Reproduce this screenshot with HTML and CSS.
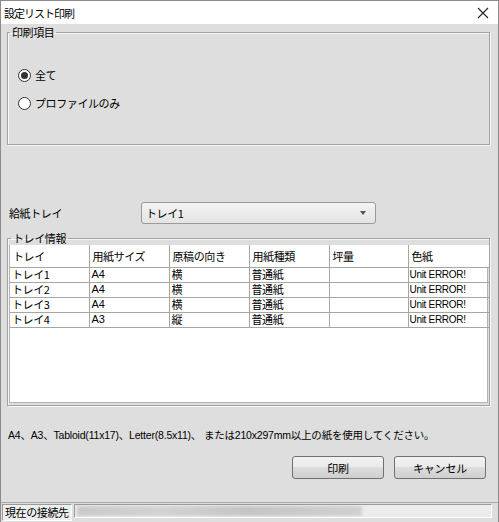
FILE: index.html
```html
<!DOCTYPE html>
<html lang="ja">
<head>
<meta charset="utf-8">
<title>設定リスト印刷</title>
<link rel="stylesheet" href="styles.css">
</head>
<body>
<div class="window">
  <div class="titlebar">
    <span class="title">設定リスト印刷</span>
    <svg class="close" width="12" height="12" viewBox="0 0 12 12"><path d="M1 1 L11 11 M11 1 L1 11" stroke="#222" stroke-width="1.1" fill="none"/></svg>
  </div>
  <div class="content">
    <fieldset class="group group-print">
      <legend>印刷項目</legend>
      <div class="radios">
        <label class="radio"><span class="radio-circle checked"></span>全て</label>
        <label class="radio"><span class="radio-circle"></span>プロファイルのみ</label>
      </div>
    </fieldset>
    <div class="tray-row">
      <span class="tray-label">給紙トレイ</span>
      <div class="select"><span class="select-text">トレイ1</span><span class="arrow"></span></div>
    </div>
    <fieldset class="group group-tray">
      <legend>トレイ情報</legend>
      <div class="table-wrap">
        <table class="grid">
          <thead>
            <tr><th>トレイ</th><th>用紙サイズ</th><th>原稿の向き</th><th>用紙種類</th><th>坪量</th><th>色紙</th></tr>
          </thead>
          <tbody>
            <tr><td>トレイ1</td><td class="lat">A4</td><td>横</td><td>普通紙</td><td></td><td class="lat err">Unit ERROR!</td></tr>
            <tr><td>トレイ2</td><td class="lat">A4</td><td>横</td><td>普通紙</td><td></td><td class="lat err">Unit ERROR!</td></tr>
            <tr><td>トレイ3</td><td class="lat">A4</td><td>横</td><td>普通紙</td><td></td><td class="lat err">Unit ERROR!</td></tr>
            <tr><td>トレイ4</td><td class="lat">A3</td><td>縦</td><td>普通紙</td><td></td><td class="lat err">Unit ERROR!</td></tr>
          </tbody>
        </table>
      </div>
    </fieldset>
    <p class="note">A4、A3、Tabloid(11x17)、Letter(8.5x11)、 または210x297mm以上の紙を使用してください。</p>
    <div class="buttons">
      <button class="btn">印刷</button>
      <button class="btn">キャンセル</button>
    </div>
  </div>
  <div class="statusbar">
    <span class="status-label">現在の接続先</span>
    <div class="status-field"><span class="blurred"></span></div>
  </div>
</div>
</body>
</html>
```

FILE: styles.css
```css
* { box-sizing: border-box; }
html, body { margin: 0; padding: 0; }
body {
  width: 499px;
  height: 522px;
  overflow: hidden;
  font-family: "Noto Sans CJK JP", "Liberation Sans", sans-serif;
  font-size: 11px;
  letter-spacing: -0.4px;
  color: #000;
  background: #dedede;
}
.window {
  width: 499px;
  height: 522px;
  border: 1px solid #8c8c8c;
  border-bottom: none;
  display: flex;
  flex-direction: column;
  background: #dedede;
}
.titlebar {
  height: 23px;
  background: #fff;
  display: flex;
  align-items: center;
  justify-content: space-between;
  padding: 0 9px 0 3px;
  flex: none;
}
.title { font-size: 11px; line-height: 14px; letter-spacing: -1px; }
.close { display: block; }

.content {
  height: 478px;
  flex: none;
  display: flex;
  flex-direction: column;
}

.group {
  margin: 0 8px 0 6px;
  padding: 0;
  border: 1px solid #a3a3a3;
  box-shadow: 1px 1px 0 #f6f6f6, inset 1px 1px 0 #f6f6f6;
  min-width: 0;
}
.group legend {
  margin-left: 2px;
  padding: 0 2px;
  font-size: 11px;
  line-height: 14px;
}
.group-print { margin-top: 1px; }
.radios {
  display: flex;
  flex-direction: column;
  gap: 12px;
  padding: 28px 0 33px 10px;
}
.radio {
  display: flex;
  align-items: center;
  height: 16px;
  line-height: 16px;
  gap: 4px;
}
.radio-circle {
  width: 13px;
  height: 13px;
  border-radius: 50%;
  border: 1px solid #333;
  background: #fff;
  display: flex;
  align-items: center;
  justify-content: center;
}
.radio-circle.checked::after {
  content: "";
  width: 7px;
  height: 7px;
  border-radius: 50%;
  background: #333;
}

.tray-row {
  display: flex;
  align-items: center;
  height: 22px;
  margin-top: 57px;
  padding-left: 8px;
}
.tray-label { width: 132px; }
.select {
  width: 235px;
  height: 22px;
  border: 1px solid #9a9a9a;
  border-radius: 3px;
  background: linear-gradient(#f3f3f3, #e4e4e4);
  display: flex;
  align-items: center;
  justify-content: space-between;
  padding: 0 9px 0 4px;
}
.arrow {
  width: 0;
  height: 0;
  border-left: 3.5px solid transparent;
  border-right: 3.5px solid transparent;
  border-top: 4px solid #555;
}

.group-tray { margin-top: 7px; padding: 0 1px 2px 1px; }
.table-wrap {
  height: 158px;
  background: #fff;
  border: 1px solid #b4b4b4;
  border-top: none;
}
.grid {
  border-collapse: collapse;
  table-layout: fixed;
  width: 479px;
}
.grid th, .grid td {
  width: 80px;
  text-align: left;
  font-weight: normal;
  white-space: nowrap;
  overflow: hidden;
  padding: 0 0 0 2px;
  border-right: 1px solid #a6a6a6;
}
.grid th:first-child, .grid td:first-child { width: 79px; }
.grid th:last-child, .grid td:last-child { width: 81px; border-right: none; }
.grid th:nth-child(5), .grid td:nth-child(5) { width: 79px; }
.grid th {
  height: 22px;
  line-height: 20px;
  font-size: 11px;
  border-bottom: 1px solid #a6a6a6;
  padding-left: 3px;
  background: #fff;
}
.grid td {
  height: 15px;
  line-height: 13px;
  font-size: 11px;
  border-bottom: 1px solid #a6a6a6;
}
.grid td.lat {
  font-family: "Liberation Sans", sans-serif;
  font-size: 11px;
  letter-spacing: 0;
}
.grid td.err {
  font-size: 10px;
  letter-spacing: -0.3px;
  padding-left: 1px;
}

.note {
  margin: 22px 0 0 7px;
  font-size: 10.5px;
  line-height: 14px;
  font-family: "Liberation Sans", "Noto Sans CJK JP", sans-serif;
  letter-spacing: -0.2px;
}
.buttons {
  display: flex;
  justify-content: flex-end;
  gap: 10px;
  margin-top: 14px;
  padding-right: 12px;
}
.btn {
  width: 92px;
  height: 23px;
  border: 1px solid #707070;
  border-radius: 3px;
  background: linear-gradient(#f2f2f2 0%, #ebebeb 45%, #dddddd 50%, #cfcfcf 100%);
  font-family: "Noto Sans CJK JP", sans-serif;
  font-size: 11px;
  letter-spacing: -0.2px;
  color: #000;
  padding: 0;
}

.statusbar {
  flex: none;
  height: 20px;
  border-top: 1px solid #a8a8a8;
  display: flex;
  align-items: flex-start;
  padding: 1px 6px 0 1px;
  gap: 2px;
}
.status-label {
  height: 17px;
  line-height: 15px;
  padding: 0 2px;
  border: 1px solid;
  border-color: #9a9a9a #fff #fff #9a9a9a;
  background: #efefef;
  font-size: 11px;
}
.status-field {
  flex: 1;
  height: 14px;
  border: 1px solid;
  border-color: #9a9a9a #fff #fff #9a9a9a;
  background: #ececec;
  overflow: hidden;
}
.blurred {
  display: block;
  width: 285px;
  height: 10px;
  margin: 1px 0 0 2px;
  background: linear-gradient(90deg, #c9c9c9, #d2d2d2 30%, #c4c4c4 60%, #d0d0d0);
  filter: blur(1.5px);
}
```
